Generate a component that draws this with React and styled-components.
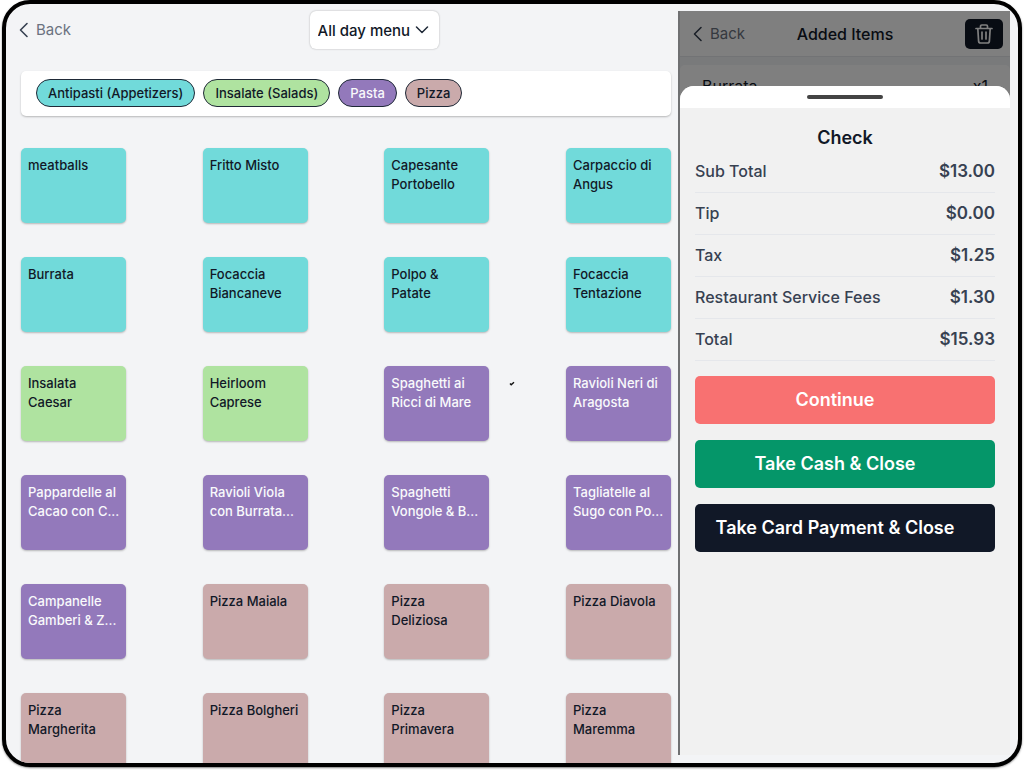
import React, { useState } from 'react';
import styled, { createGlobalStyle } from 'styled-components';

const MENUS = ['All day menu'];

const CATEGORIES = {
    antipasti: { label: 'Antipasti (Appetizers)', bg: '#71dada', color: '#111827' },
    insalate: { label: 'Insalate (Salads)', bg: '#afe3a0', color: '#111827' },
    pasta: { label: 'Pasta', bg: '#9379bb', color: '#f9fafb' },
    pizza: { label: 'Pizza', bg: '#caaaab', color: '#111827' },
};

const ITEMS = [
    ['meatballs', 'antipasti'],
    ['Fritto Misto', 'antipasti'],
    ['Capesante Portobello', 'antipasti'],
    ['Carpaccio di Angus', 'antipasti'],
    ['Burrata', 'antipasti'],
    ['Focaccia Biancaneve', 'antipasti'],
    ['Polpo &\nPatate', 'antipasti'],
    ['Focaccia Tentazione', 'antipasti'],
    ['Insalata Caesar', 'insalate'],
    ['Heirloom Caprese', 'insalate'],
    ['Spaghetti ai Ricci di Mare', 'pasta'],
    ['Ravioli Neri di Aragosta', 'pasta'],
    ['Pappardelle al Cacao con C...', 'pasta'],
    ['Ravioli Viola con Burrata...', 'pasta'],
    ['Spaghetti Vongole & B...', 'pasta'],
    ['Tagliatelle al Sugo con Po...', 'pasta'],
    ['Campanelle Gamberi & Z...', 'pasta'],
    ['Pizza Maiala', 'pizza'],
    ['Pizza\nDeliziosa', 'pizza'],
    ['Pizza Diavola', 'pizza'],
    ['Pizza\nMargherita', 'pizza'],
    ['Pizza Bolgheri', 'pizza'],
    ['Pizza\nPrimavera', 'pizza'],
    ['Pizza\nMaremma', 'pizza'],
];

const TOTALS = [
    ['Sub Total', '$13.00'],
    ['Tip', '$0.00'],
    ['Tax', '$1.25'],
    ['Restaurant Service Fees', '$1.30'],
    ['Total', '$15.93'],
];

const ChevronLeft = () => (
    <svg width="10" height="16" viewBox="0 0 10 16" fill="none" stroke="#374151" strokeWidth="1.6" strokeLinecap="round" strokeLinejoin="round" aria-hidden="true">
        <path d="M8 1.5 1.5 8 8 14.5" />
    </svg>
);

const ChevronDown = () => (
    <svg width="14" height="8" viewBox="0 0 14 8" fill="none" stroke="#1f2937" strokeWidth="1.5" strokeLinecap="round" strokeLinejoin="round" aria-hidden="true">
        <path d="M1.5 1 7 6.5 12.5 1" />
    </svg>
);

const TrashIcon = () => (
    <svg width="18" height="20" viewBox="0 0 18 20" fill="none" stroke="#fff" strokeWidth="1.7" strokeLinecap="round" strokeLinejoin="round" aria-hidden="true">
        <path d="M1 4.5h16M5.5 4.5V2.3c0-.8.5-1.3 1.3-1.3h4.4c.8 0 1.3.5 1.3 1.3v2.2M2.8 4.5l.8 12.6c.1 1.1.8 1.9 1.9 1.9h7c1.1 0 1.8-.8 1.9-1.9l.8-12.6M7 8v7M11 8v7" />
    </svg>
);

const MenuSection = () => {
    const [menu, setMenu] = useState(MENUS[0]);

    return (
        <MenuColumn>
            <MenuHeader>
                <BackButton type="button"><ChevronLeft />Back</BackButton>
                <MenuPicker>
                    <select aria-label="Menu" value={menu} onChange={(e) => setMenu(e.target.value)}>
                        {MENUS.map((name) => <option key={name}>{name}</option>)}
                    </select>
                    <ChevronDown />
                </MenuPicker>
            </MenuHeader>
            <CategoryBar>
                {Object.entries(CATEGORIES).map(([key, category]) => (
                    <CategoryPill key={key} type="button" $bg={category.bg} $color={category.color}>
                        {category.label}
                    </CategoryPill>
                ))}
            </CategoryBar>
            <ItemGrid>
                {ITEMS.map(([name, category]) => (
                    <ItemTile
                        key={name}
                        type="button"
                        $bg={CATEGORIES[category].bg}
                        $color={CATEGORIES[category].color}
                    >
                        {name}
                    </ItemTile>
                ))}
                <Tick width="6" height="5" viewBox="0 0 6 5" fill="none" stroke="#111" strokeWidth="1.4" aria-hidden="true">
                    <path d="M1 2.5 2.2 3.8 5 1.2" />
                </Tick>
            </ItemGrid>
        </MenuColumn>
    );
};

const CheckSheet = () => (
    <Sheet role="dialog" aria-label="Check">
        <SheetGrip><span /></SheetGrip>
        <SheetBody>
            <SheetTitle>Check</SheetTitle>
            <Totals>
                <tbody>
                    {TOTALS.map(([label, amount]) => (
                        <tr key={label}>
                            <th scope="row">{label}</th>
                            <td>{amount}</td>
                        </tr>
                    ))}
                </tbody>
            </Totals>
            <Actions>
                <ActionButton type="button" $bg="#f87171">Continue</ActionButton>
                <ActionButton type="button" $bg="#059669">Take Cash &amp; Close</ActionButton>
                <ActionButton type="button" $bg="#111827">Take Card Payment &amp; Close</ActionButton>
            </Actions>
        </SheetBody>
    </Sheet>
);

const App = () => (
    <Screen>
        <GlobalStyle />
        <Device>
            <MenuSection />
            <OrderPanel>
                <OrderHeader>
                    <BackButton type="button"><ChevronLeft />Back</BackButton>
                    <h2>Added Items</h2>
                    <DeleteButton type="button" aria-label="Clear items"><TrashIcon /></DeleteButton>
                </OrderHeader>
                <OrderItem>
                    <span>Burrata</span>
                    <span>x1</span>
                </OrderItem>
                <Backdrop />
                <CheckSheet />
            </OrderPanel>
        </Device>
    </Screen>
);

const GlobalStyle = createGlobalStyle`
    *, *:before, *:after {
        box-sizing: border-box;
    }

    body {
        margin: 0;
        background: #fff;
        color: #111827;
        font-family: Inter, "Liberation Sans", sans-serif;
    }

    button, select {
        border: 0;
        font: inherit;
        cursor: pointer;
    }
`;

const Screen = styled.div`
    height: 100vh;
    padding: 0 2px 4px;
`;

const Device = styled.main`
    display: flex;
    height: 100%;
    overflow: hidden;
    border: 4px solid #000;
    border-radius: 28px;
    background: #f3f4f6;
    box-shadow: 0 1px 2px rgba(0, 0, 0, 0.5);
`;

const MenuColumn = styled.section`
    flex: 1;
    min-width: 0;
    padding: 7px 7px 0 15px;
`;

const MenuHeader = styled.header`
    display: grid;
    grid-template-columns: 5fr auto 4fr;
    align-items: center;
    margin-left: -2px;
`;

const BackButton = styled.button`
    display: flex;
    align-items: center;
    justify-self: start;
    gap: 7px;
    padding: 0;
    background: none;
    color: #6b7280;
    font-size: 15px;
    line-height: 20px;
`;

const MenuPicker = styled.div`
    position: relative;

    select {
        display: block;
        height: 38px;
        padding: 0 28px 0 8px;
        appearance: none;
        border-radius: 6px;
        background: #fff;
        box-shadow: 0 0 2px rgba(0, 0, 0, 0.3);
        color: #111827;
        font-size: 15px;
        font-weight: 500;
    }

    svg {
        position: absolute;
        top: 15px;
        right: 10px;
        pointer-events: none;
    }
`;

const CategoryBar = styled.nav`
    display: flex;
    gap: 8px;
    margin-top: 22px;
    padding: 8px 15px 9px;
    border-radius: 5px;
    background: #fff;
    box-shadow: 0 1px 2px rgba(0, 0, 0, 0.25);
`;

const CategoryPill = styled.button`
    height: 28px;
    padding: 0 11px;
    border: 1px solid #1f2937;
    border-radius: 14px;
    background: ${({ $bg }) => $bg};
    color: ${({ $color }) => $color};
    font-size: 13px;
    font-weight: 500;
    white-space: nowrap;
`;

const ItemGrid = styled.div`
    position: relative;
    display: grid;
    grid-template-columns: repeat(4, 105px);
    grid-auto-rows: 75px;
    justify-content: space-between;
    row-gap: 34px;
    margin-top: 32px;
`;

const ItemTile = styled.button`
    display: flex;
    align-items: flex-start;
    padding: 8px 3px 8px 7px;
    border-radius: 5px;
    background: ${({ $bg }) => $bg};
    box-shadow: 0 1px 2px rgba(0, 0, 0, 0.25);
    color: ${({ $color }) => $color};
    font-size: 13px;
    font-weight: 500;
    line-height: 19px;
    text-align: left;
    white-space: pre-line;
`;

const Tick = styled.svg`
    position: absolute;
    top: 233px;
    left: 488px;
`;

const OrderPanel = styled.aside`
    position: relative;
    flex: 0 0 332px;
    margin: 7px 8px 8px 0;
    overflow: hidden;
    border-left: 2px solid #6f7072;
    background: #f3f4f6;
`;

const OrderHeader = styled.header`
    display: grid;
    grid-template-columns: 1fr auto 1fr;
    align-items: center;
    height: 46px;
    padding: 0 7px;
    border-bottom: 1px solid #e5e7eb;
    background: #fff;

    h2 {
        margin: 0;
        font-size: 16px;
        font-weight: 500;
    }

    ${BackButton} {
        padding-left: 6px;
    }
`;

const DeleteButton = styled.button`
    display: flex;
    align-items: center;
    justify-content: center;
    justify-self: end;
    width: 38px;
    height: 30px;
    padding: 0;
    border-radius: 5px;
    background: #111827;
`;

const OrderItem = styled.div`
    display: flex;
    justify-content: space-between;
    margin-top: 8px;
    padding: 10px 22px;
    border-radius: 5px;
    background: #fff;
    font-size: 16px;
    line-height: 22px;
`;

const Backdrop = styled.div`
    position: absolute;
    inset: 0;
    background: rgba(0, 0, 0, 0.5);
`;

const Sheet = styled.section`
    position: absolute;
    inset: 75px 0 0;
    overflow: hidden;
    border-radius: 14px 14px 0 0;
    background: #f1f1f1;
`;

const SheetGrip = styled.div`
    display: flex;
    align-items: center;
    justify-content: center;
    height: 22px;
    background: #fff;

    span {
        width: 76px;
        height: 4px;
        border-radius: 2px;
        background: #444;
    }
`;

const SheetBody = styled.div`
    padding: 17px 15px;
`;

const SheetTitle = styled.h1`
    margin: 0;
    font-size: 18px;
    font-weight: 600;
    line-height: 25px;
    text-align: center;
`;

const Totals = styled.table`
    width: 100%;
    border-collapse: collapse;
    color: #374151;
    font-size: 16px;
    line-height: 24px;

    th, td {
        height: 42px;
        padding: 0;
        border-bottom: 1px solid #e5e7eb;
    }

    th {
        font-weight: 500;
        text-align: left;
    }

    td {
        font-size: 17px;
        font-weight: 600;
        text-align: right;
    }
`;

const Actions = styled.div`
    display: grid;
    gap: 16px;
    margin-top: 15px;
`;

const ActionButton = styled.button`
    height: 48px;
    padding: 0 20px 0 0;
    border-radius: 5px;
    background: ${({ $bg }) => $bg};
    color: #fff;
    font-size: 18px;
    font-weight: 600;
`;

export default App;
